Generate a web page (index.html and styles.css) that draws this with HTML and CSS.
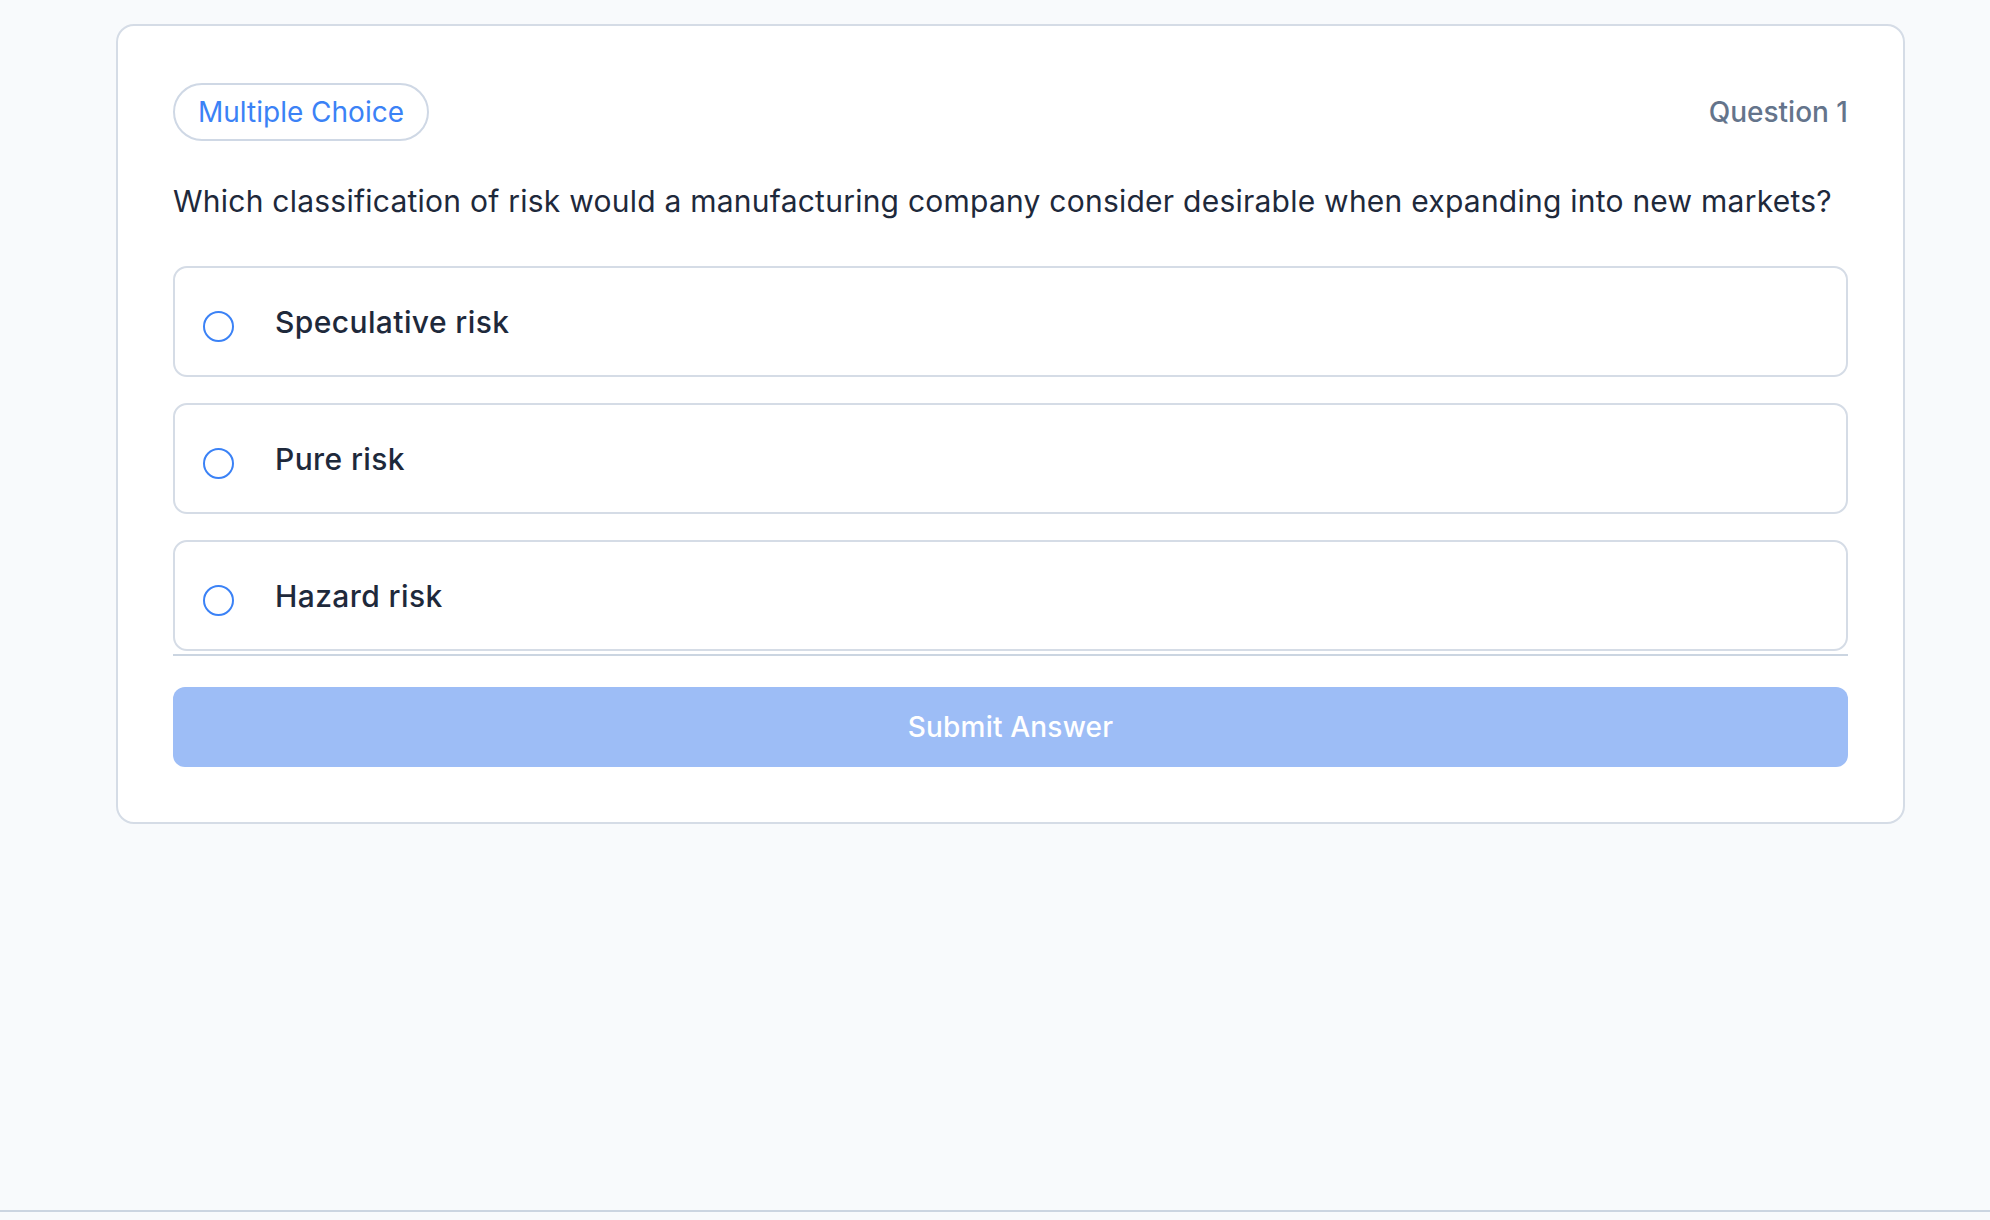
FILE: index.html
```html
<!DOCTYPE html>
<html lang="en">
<head>
<meta charset="utf-8">
<title>Quiz</title>
<link rel="stylesheet" href="styles.css">
</head>
<body>
<div class="page">
  <div class="card">
    <div class="card-head">
      <span class="badge">Multiple Choice</span>
      <span class="qnum">Question 1</span>
    </div>
    <p class="question">Which classification of risk would a manufacturing company consider desirable when expanding into new markets?</p>
    <div class="options">
      <label class="option"><span class="radio"></span><span class="opt-text">Speculative risk</span></label>
      <label class="option"><span class="radio"></span><span class="opt-text">Pure risk</span></label>
      <label class="option"><span class="radio"></span><span class="opt-text">Hazard risk</span></label>
    </div>
    <button class="submit" type="button">Submit Answer</button>
  </div>
</div>
</body>
</html>
```
FILE: styles.css
```css
* { box-sizing: border-box; }
html, body { margin: 0; padding: 0; background: #f8fafc; }
body { font-family: Inter, "Noto Sans", "Liberation Sans", sans-serif; color: #1e293b; }
.page {
  height: 1212px;
  border-bottom: 2px solid #cbd5e1;
  padding: 24px 85px 0 116px;
}
.card {
  background: #ffffff;
  border: 2px solid #d5dce6;
  border-radius: 18px;
  padding: 57px 55px 55px 55px;
}
.card-head {
  display: flex;
  justify-content: space-between;
  align-items: center;
}
.badge {
  display: inline-flex;
  align-items: center;
  height: 58px;
  padding: 0 23px;
  border: 2px solid #cfd8e5;
  border-radius: 29px;
  color: #3b82f6;
  font-size: 28px;
  font-weight: 400;
}
.qnum {
  color: #64748b;
  font-size: 28px;
  font-weight: 500;
}
.question {
  margin: 38px 0 0 0;
  font-size: 30px;
  line-height: 45px;
  color: #1e293b;
  letter-spacing: 0.24px;
}
.options {
  margin-top: 42px;
  display: flex;
  flex-direction: column;
  gap: 26px;
  padding-bottom: 3px;
  border-bottom: 2px solid #cbd5e1;
}
.option {
  display: flex;
  align-items: center;
  height: 111px;
  border: 2px solid #d5dce6;
  border-radius: 14px;
  padding-left: 28px;
  background: #ffffff;
}
.radio {
  width: 31px;
  height: 31px;
  border: 2px solid #3b82f6;
  border-radius: 50%;
  margin-top: 10px;
  margin-right: 41px;
  flex: none;
}
.opt-text {
  font-size: 30px;
  font-weight: 500;
  color: #1e293b;
  letter-spacing: 0.4px;
}
.submit {
  display: block;
  width: 100%;
  height: 80px;
  margin-top: 31px;
  border: none;
  border-radius: 12px;
  background: #9dbdf6;
  color: #ffffff;
  font-family: inherit;
  font-size: 28px;
  font-weight: 500;
  letter-spacing: 0.2px;
}
```
